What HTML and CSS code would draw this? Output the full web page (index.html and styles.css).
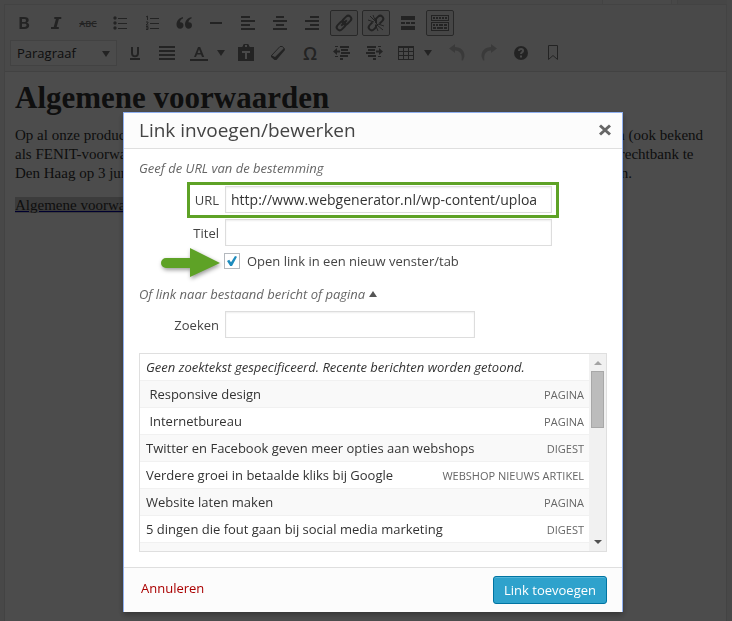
FILE: index.html
```
<!DOCTYPE html>
<html lang="nl">
<head>
  <meta charset="UTF-8" />
  <meta name="viewport" content="width=device-width, initial-scale=1.0" />
  <title>Link invoegen/bewerken</title>
  <link rel="stylesheet" href="styles.css">
</head>
<body>
  <div class="page">
    <div class="tabs">
      <div class="tab tab-active"></div>
      <div class="tab"></div>
    </div>
    <div class="editor">
      <div class="toolbar">
        <div class="toolbar-row">
          <button class="tool" aria-label="Vet"><svg width="20" height="20" viewBox="0 0 20 20"><path fill-rule="evenodd" d="M5.500 4h4.600c3.300 0 4.600 1.200 4.600 3.100 0 1.300-.7 2.200-1.900 2.600 1.600.3 2.400 1.300 2.400 2.800 0 2.300-1.800 3.500-4.700 3.500H5.500zM8 6v2.900h2c1.300 0 2-.4 2-1.500S11.300 6 9.900 6zm0 4.800V14h2.200c1.500 0 2.300-.5 2.300-1.700 0-1.100-.8-1.500-2.300-1.500z"/></svg></button>
          <button class="tool" aria-label="Cursief"><svg width="20" height="20" viewBox="0 0 20 20"><path d="M8.300 4h7v2h-2.400l-2.200 8h2.100v2H5v-2h2.700l2.200-8H8.300z"/></svg></button>
          <button class="tool strike" aria-label="Doorhalen"><span>ABC</span></button>
          <button class="tool" aria-label="Lijst"><svg width="20" height="20" viewBox="0 0 20 20"><circle cx="5" cy="5" r="1.700"/><circle cx="5" cy="10" r="1.700"/><circle cx="5" cy="15" r="1.700"/><path d="M8 5h9v1H8zM8 10h9v1H8zM8 15h9v1H8z"/></svg></button>
          <button class="tool" aria-label="Genummerde lijst"><svg width="20" height="20" viewBox="0 0 20 20"><path d="M8 5h9v1H8zM8 10h9v1H8zM8 15h9v1H8z"/><path class="line" d="M4 4l1.500-1v4M4 9h2v1l-2 2h2.500M4 13.500h2v3H4M4 15h2"/></svg></button>
          <button class="tool" aria-label="Citaat"><svg width="20" height="20" viewBox="0 0 20 20"><path d="M9 4v1.600C7.300 6.300 6.100 7.400 6 9.200c2.100-.3 3.500 1.100 3.500 3 0 2-1.400 3.500-3.400 3.500-2.200 0-3.600-1.700-3.600-4.200C2.500 7.800 5 4.800 9 4zM17.500 4v1.600c-1.700.7-2.900 1.800-3 3.600 2.100-.3 3.500 1.100 3.500 3 0 2-1.400 3.500-3.400 3.500-2.200 0-3.600-1.700-3.600-4.200 0-3.700 2.500-6.700 6.500-7.500z"/></svg></button>
          <button class="tool" aria-label="Horizontale lijn"><svg width="20" height="20" viewBox="0 0 20 20"><path d="M4 9h12v2H4z"/></svg></button>
          <button class="tool" aria-label="Links uitlijnen"><svg width="20" height="20" viewBox="0 0 20 20"><path d="M3 3h9v2H3zM3 7h14v2H3zM3 11h9v2H3zM3 15h14v2H3z"/></svg></button>
          <button class="tool" aria-label="Centreren"><svg width="20" height="20" viewBox="0 0 20 20"><path d="M6 3h8v2H6zM3 7h14v2H3zM6 11h8v2H6zM3 15h14v2H3z"/></svg></button>
          <button class="tool" aria-label="Rechts uitlijnen"><svg width="20" height="20" viewBox="0 0 20 20"><path d="M8 3h9v2H8zM3 7h14v2H3zM8 11h9v2H8zM3 15h14v2H3z"/></svg></button>
          <button class="tool pressed" aria-label="Link"><svg width="20" height="20" viewBox="0 0 20 20"><g class="chain" transform="rotate(-45 10 10)"><rect x="1" y="7" width="10" height="6" rx="3"/><rect x="9" y="7" width="10" height="6" rx="3"/><path d="M6 10h8"/></g></svg></button>
          <button class="tool pressed" aria-label="Link verwijderen"><svg width="20" height="20" viewBox="0 0 20 20"><g class="chain" transform="rotate(-45 10 10)"><path d="M8 7H4a3 3 0 0 0 0 6h3l2-2M12 7h4a3 3 0 0 1 0 6h-4M13 7l-3 3"/></g><path class="line" d="M9 8L4 3M9 7L7 2M8 9L2 7M11 12l6 5M12 11l6 2M10 13l2 5M9 9l3 3"/></svg></button>
          <button class="tool" aria-label="Lees meer"><svg width="20" height="20" viewBox="0 0 20 20"><path d="M3 3h14v4H3zM3 9h4v2H3zM8 9h4v2H8zM13 9h4v2h-4zM3 13h14v4H3z"/></svg></button>
          <button class="tool pressed" aria-label="Werkbalk"><svg width="20" height="20" viewBox="0 0 20 20"><path fill-rule="evenodd" d="M1 2h18v6H1zM2 3v4h16V3zM1 9h18v9H1zM2 10v7h16v-7z"/><path d="M3 4h2v2H3zM6 4h2v2H6zM9 4h2v2H9zM12 4h2v2h-2zM15 4h2v2h-2zM3 11h2v2H3zM6 11h2v2H6zM9 11h4v2H9zM14 11h3v2h-3zM3 14h3v2H3zM7 14h6v2H7zM14 14h3v2h-3z"/></svg></button>
        </div>
        <div class="toolbar-row">
          <div class="format">
            <select aria-label="Opmaak"><option>Paragraaf</option></select>
            <span class="caret"></span>
          </div>
          <button class="tool" aria-label="Onderstrepen"><svg width="20" height="20" viewBox="0 0 20 20"><path d="M6 4h2v6c0 1.500.7 2.300 2 2.300s2-.8 2-2.300V4h2v6.200c0 2.500-1.500 4-4 4s-4-1.500-4-4zM5 15h10v2H5z"/></svg></button>
          <button class="tool" aria-label="Uitvullen"><svg width="20" height="20" viewBox="0 0 20 20"><path d="M2 3h16v2H2zM2 7h16v2H2zM2 11h16v2H2zM2 15h16v2H2z"/></svg></button>
          <button class="tool split" aria-label="Tekstkleur"><svg width="20" height="20" viewBox="0 0 20 20"><path fill-rule="evenodd" d="M9 4h2.200l4 10H13l-1-2.600H8L7 14H5zm1 2.200L8.600 10h2.900zM1 16h18v2H1z"/></svg><span class="caret"></span></button>
          <button class="tool" aria-label="Plakken als tekst"><svg width="20" height="20" viewBox="0 0 20 20"><path fill-rule="evenodd" d="M2 4h4l1-1V2l1-1h4l1 1v1l1 1h4v14H2zM9 2v2h2V2zM6 8v2h3v6h2v-6h3V8z"/></svg></button>
          <button class="tool" aria-label="Opmaak wissen"><svg width="20" height="20" viewBox="0 0 20 20"><path d="M3 12l4 2 9-9 1 2-8.500 10H6.500L3 14z"/><path class="line" d="M12 3.500h2.500L16.500 6 8 15.500H6L3.500 12.500z"/></svg></button>
          <button class="tool omega" aria-label="Speciale tekens">Ω</button>
          <button class="tool" aria-label="Minder inspringen"><svg width="20" height="20" viewBox="0 0 20 20"><path d="M3 3h3v1H3zM8 3h9v2H8zM9 6h7v2H9zM9 9h9v2H9zM8 12h8v2H8zM3 13h3v1H3zM8 15h3v2H8zM1 8.500L5 5v2.500h3v2H5V12z"/></svg></button>
          <button class="tool" aria-label="Meer inspringen"><svg width="20" height="20" viewBox="0 0 20 20"><path d="M3 3h9v2H3zM14 3h3v1h-3zM4 6h7v2H4zM2 9h9v2H2zM4 12h8v2H4zM14 13h3v1h-3zM9 15h3v2H9zM19 8.500L15 5v2.500h-3v2h3V12z"/></svg></button>
          <button class="tool split wide" aria-label="Tabel"><svg width="20" height="20" viewBox="0 0 20 20"><path fill-rule="evenodd" d="M2 3h16v14H2zM3 5v3h4V5zM8 5v3h4V5zM13 5v3h4V5zM3 9v3h4V9zM8 9v3h4V9zM13 9v3h4V9zM3 13v3h4v-3zM8 13v3h4v-3zM13 13v3h4v-3z"/></svg><span class="caret"></span></button>
          <button class="tool" aria-label="Ongedaan maken" disabled><svg width="20" height="20" viewBox="0 0 20 20"><path d="M8 1v3c6 0 10 4 9.500 9.500l-1.500 4h-1.500C15.500 11 13 8 8 7.500V10L2 5.500z"/></svg></button>
          <button class="tool" aria-label="Opnieuw" disabled><svg width="20" height="20" viewBox="0 0 20 20"><path d="M12 1v3C6 4 2 8 2.500 13.500l1.500 4h1.500C4.500 11 7 8 12 7.500V10l6-4.500z"/></svg></button>
          <button class="tool" aria-label="Help"><svg width="20" height="20" viewBox="0 0 20 20"><circle cx="10" cy="10" r="7"/><path class="mark" d="M8 8c0-3 4.500-2.500 4 0-.2 1.200-2 1.300-2 3M10 12.500v2"/></svg></button>
          <button class="tool" aria-label="Bladwijzer"><svg width="20" height="20" viewBox="0 0 20 20"><path class="line" d="M5.500 2.500h9v14L10 12.500l-4.500 4z"/></svg></button>
        </div>
      </div>
      <div class="content">
        <h1>Algemene voorwaarden</h1>
        <p>Op al onze producten en diensten zijn uitsluitend van toepassing alle algemene leveringsvoorwaarden (ook bekend<br>
          als FENIT-voorwaarden), zoals deze zijn gedeponeerd in Den Haag ter griffie bij de arrondissementsrechtbank te<br>
          Den Haag op 3 juni 2003 onder nummer 60/2003, en alle eventuele latere wijzigingen of aanvullingen.</p>
        <p><a href="#">Algemene voorwaarden</a></p>
      </div>
    </div>
  </div>

  <div class="backdrop"></div>

  <form class="modal" role="dialog" aria-labelledby="modal-title">
    <div class="modal-header">
      <h2 id="modal-title">Link invoegen/bewerken</h2>
      <button type="button" class="close" aria-label="Sluiten"><svg width="12" height="12" viewBox="0 0 12 12"><path d="M1 1.500l10 9M11 1.500l-10 9"/></svg></button>
    </div>
    <div class="modal-body">
      <p class="hint">Geef de URL van de bestemming</p>
      <div class="field highlighted">
        <label for="url">URL</label>
        <input type="text" id="url" value="http://www.webgenerator.nl/wp-content/uploa">
      </div>
      <div class="field">
        <label for="titel">Titel</label>
        <input type="text" id="titel">
      </div>
      <div class="target">
        <svg class="arrow" width="64" height="36" viewBox="0 0 64 36"><path d="M7 13H31V3L61 18L31 32V23H7a5 5 0 0 1 0-10z"/></svg>
        <input type="checkbox" id="target" checked>
        <label for="target">Open link in een nieuw venster/tab</label>
      </div>
      <p class="hint toggle">Of link naar bestaand bericht of pagina <span class="caret up"></span></p>
      <div class="field search">
        <label for="zoeken">Zoeken</label>
        <input type="text" id="zoeken">
      </div>
      <div class="results">
        <ul>
          <li><em>Geen zoektekst gespecificeerd. Recente berichten worden getoond.</em></li>
          <li><span>&nbsp;Responsive design</span><small>Pagina</small></li>
          <li><span>&nbsp;Internetbureau</span><small>Pagina</small></li>
          <li><span>Twitter en Facebook geven meer opties aan webshops</span><small>Digest</small></li>
          <li><span>Verdere groei in betaalde kliks bij Google</span><small>Webshop nieuws artikel</small></li>
          <li><span>Website laten maken</span><small>Pagina</small></li>
          <li><span>5 dingen die fout gaan bij social media marketing</span><small>Digest</small></li>
          <li></li>
        </ul>
        <div class="scrollbar">
          <span class="scroll-arrow"></span>
          <span class="thumb"></span>
          <span class="scroll-arrow down"></span>
        </div>
      </div>
    </div>
    <div class="modal-footer">
      <a href="#" class="cancel">Annuleren</a>
      <button type="submit" class="submit">Link toevoegen</button>
    </div>
  </form>
</body>
</html>
```
FILE: styles.css
```
* { box-sizing: border-box; margin: 0; padding: 0; }
body {
  background: #f1f1f1;
  font-family: "Open Sans", sans-serif;
  font-size: 13px;
  color: #444;
  overflow: hidden;
}
button, input, select { font-family: inherit; }
.page {
  display: flex;
  flex-direction: column;
  height: 100vh;
  padding: 0 5px 0 4px;
}
.tabs {
  display: flex;
  justify-content: flex-end;
  gap: 5px;
  height: 4px;
}
.tab {
  width: 50px;
  background: #ebebeb;
  border-left: 1px solid #e0e0e0;
}
.tab-active {
  width: 70px;
  background: #f5f5f5;
  border-right: 1px solid #e0e0e0;
}
.editor {
  flex: 1;
  background: #fff;
  border: 1px solid #e0e0e0;
  border-bottom: none;
}
.toolbar {
  display: flex;
  flex-direction: column;
  gap: 4px;
  padding: 5px 3px;
  background: #f5f5f5;
  border-bottom: 1px solid #dedede;
}
.toolbar-row {
  display: flex;
  align-items: center;
  gap: 4px;
  padding-left: 2px;
}
.tool {
  display: flex;
  align-items: center;
  justify-content: center;
  width: 28px;
  height: 26px;
  background: none;
  border: 1px solid transparent;
  border-radius: 2px;
  color: #777;
}
.tool svg {
  flex: none;
  fill: #777;
}
.tool:disabled svg { fill: #c4c4c4; }
.tool.pressed {
  background: #ebebeb;
  border-color: #888;
}
.tool.split {
  justify-content: flex-start;
  gap: 8px;
  width: 43px;
  padding-left: 3px;
}
.tool.wide { width: 47px; }
.tool .line,
.tool .chain {
  fill: none;
  stroke: #777;
  stroke-width: 1;
}
.tool .chain { stroke-width: 2; }
.tool .mark {
  fill: none;
  stroke: #f5f5f5;
  stroke-width: 2;
}
.strike {
  font-size: 9px;
  font-weight: 600;
  text-decoration: line-through;
}
.omega {
  font-size: 18px;
  font-weight: 600;
}
.caret {
  flex: none;
  border: 4px solid transparent;
  border-top: 6px solid #777;
  border-bottom: none;
}
.format {
  position: relative;
  width: 107px;
  height: 26px;
}
.format select {
  appearance: none;
  width: 100%;
  height: 100%;
  padding: 0 6px;
  font-size: 13px;
  color: #333;
  background: #fafafa;
  border: 1px solid #ddd;
}
.format .caret {
  position: absolute;
  top: 11px;
  right: 7px;
  pointer-events: none;
}
.content {
  padding: 10px;
  font-family: Georgia, "Liberation Serif", serif;
  font-size: 15px;
  line-height: 19px;
  color: #333;
  white-space: nowrap;
}
.content h1 {
  margin-bottom: 12px;
  font-size: 31px;
  line-height: 32px;
}
.content p { margin-bottom: 13px; }
.content a {
  color: #333;
  background: #c8c8c8;
  text-decoration-color: #0000a0;
}
.backdrop {
  position: fixed;
  inset: 0;
  background: rgba(0, 0, 0, 0.7);
}
.modal {
  position: fixed;
  top: 112px;
  left: 50%;
  width: 500px;
  margin-left: -243px;
  background: #fff;
  border: 1px solid #8fb0f0;
  border-bottom: none;
  box-shadow: 0 3px 6px rgba(0, 0, 0, 0.3);
}
.modal-header {
  display: flex;
  align-items: center;
  justify-content: space-between;
  height: 36px;
  padding: 0 11px 2px 15px;
  background: #fcfcfc;
  border-bottom: 1px solid #dfdfdf;
}
.modal-header h2 {
  font-size: 19px;
  font-weight: 400;
}
.close {
  display: flex;
  background: none;
  border: none;
}
.close path {
  stroke: #666;
  stroke-width: 3;
}
.modal-body { padding: 9px 15px 15px; }
.hint {
  margin-bottom: 8px;
  line-height: 20px;
  font-style: italic;
  color: #666;
}
.hint.toggle {
  display: flex;
  align-items: center;
  gap: 4px;
  margin: 14px 0 7px;
}
.caret.up {
  border-top: none;
  border-bottom: 6px solid #555;
}
.field {
  position: relative;
  display: flex;
  align-items: center;
  gap: 6px;
  margin-bottom: 6px;
}
.field label {
  width: 80px;
  text-align: right;
}
.field input {
  width: 327px;
  height: 27px;
  padding: 0 6px 0 5px;
  font-size: 14px;
  color: #333;
  border: 1px solid #ddd;
  box-shadow: inset 0 1px 2px rgba(0, 0, 0, 0.07);
}
.field.search { margin-bottom: 15px; }
.field.search input { width: 250px; }
/* green frame around the URL row */
.highlighted::after {
  content: "";
  box-sizing: border-box;
  position: absolute;
  top: -4px;
  left: 48px;
  width: 372px;
  height: 36px;
  border: 3px solid #5ea226;
  pointer-events: none;
}
.target {
  position: relative;
  display: flex;
  align-items: center;
  gap: 7px;
  height: 18px;
  padding-left: 85px;
}
.target input {
  appearance: none;
  display: grid;
  place-items: center;
  width: 16px;
  height: 16px;
  background: #fff;
  border: 1px solid #b4b9be;
}
.target input:checked::before {
  content: "";
  width: 10px;
  height: 10px;
  background: #1e8cbe;
  clip-path: polygon(0 50%, 22% 38%, 40% 62%, 80% 0, 100% 8%, 50% 100%, 32% 100%);
}
.arrow {
  position: absolute;
  top: -7px;
  left: 20px;
  fill: #5ea226;
  filter: drop-shadow(1px 2px 2px rgba(0, 0, 0, 0.4));
}
.results {
  display: flex;
  height: 199px;
  border: 1px solid #dfdfdf;
  overflow: hidden;
}
.results ul {
  flex: 1;
  list-style: none;
}
.results li {
  display: flex;
  align-items: center;
  justify-content: space-between;
  height: 27px;
  padding: 0 5px 0 6px;
  color: #333;
  border-bottom: 1px solid #f1f1f1;
}
.results li:nth-child(even) { background: #f9f9f9; }
.results small {
  font-size: 11px;
  text-transform: uppercase;
  color: #666;
}
.scrollbar {
  display: flex;
  flex-direction: column;
  align-items: center;
  width: 17px;
  padding: 7px 0;
  background: #f1f1f1;
}
.thumb {
  width: 13px;
  height: 57px;
  margin: 6px 0 auto;
  background: #bcbcbc;
  border: 1px solid #a8a8a8;
}
.scroll-arrow {
  border: 4px solid transparent;
  border-top: none;
  border-bottom: 4px solid #a3a3a3;
}
.scroll-arrow.down {
  border-top: 4px solid #505050;
  border-bottom: none;
}
.modal-footer {
  display: flex;
  align-items: center;
  justify-content: space-between;
  height: 45px;
  padding: 0 15px 0 17px;
  background: #fcfcfc;
  border-top: 1px solid #dfdfdf;
}
.cancel {
  padding-bottom: 4px;
  color: #a00;
  text-decoration: none;
}
.submit {
  height: 28px;
  padding: 0 10px;
  font-size: 13px;
  color: #fff;
  background: #2ea2cc;
  border: 1px solid #0074a2;
  border-radius: 3px;
  box-shadow: inset 0 1px 0 rgba(120, 200, 230, 0.5);
}
```
